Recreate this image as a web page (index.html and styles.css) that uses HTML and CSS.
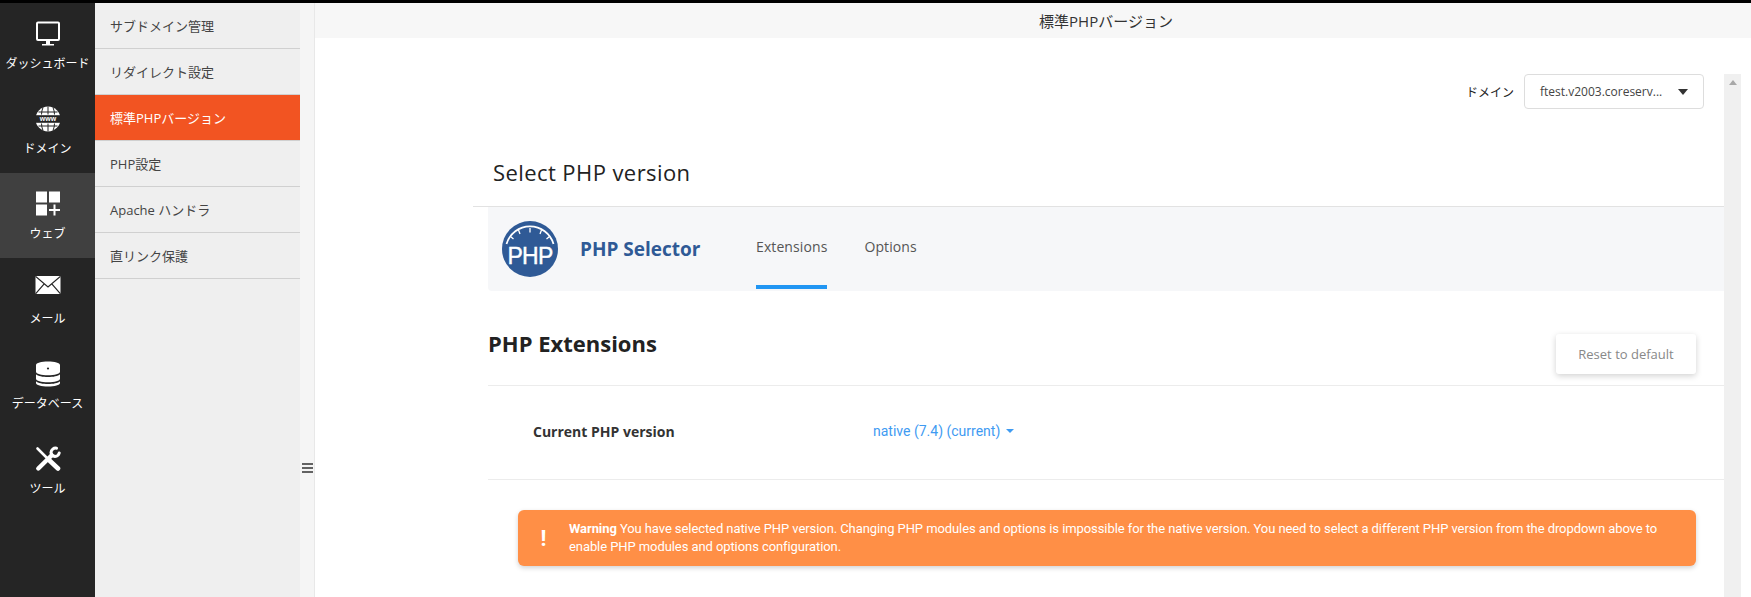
FILE: index.html
```html
<!DOCTYPE html>
<html lang="ja">
<head>
<meta charset="utf-8">
<title>標準PHPバージョン</title>
<link rel="stylesheet" href="styles.css">
</head>
<body>
<div class="topline"></div>
<div class="app">
  <nav class="rail">
    <a class="rail-item">
      <svg class="rail-icon" viewBox="0 0 26 26"><path fill="#fff" fill-rule="evenodd" d="M3 .5h20a2 2 0 0 1 2 2v15.500a2 2 0 0 1-2 2H15v3h4v1.500H7V23h4v-3H3a2 2 0 0 1-2-2V2.500a2 2 0 0 1 2-2zm0 2V18h20V2.500z"/></svg>
      <span>ダッシュボード</span>
    </a>
    <a class="rail-item">
      <svg class="rail-icon" viewBox="0 0 26 26"><circle cx="13" cy="13" r="12.500" fill="#fff"/><rect x="0" y="9.200" width="26" height="7.600" fill="#252525"/><path d="M3.500 6h19M3.500 20h19M13 .5v8M13 17.500v8M8 1.500Q6.500 5 6.500 8.500M18 1.500q1.500 3.500 1.500 7M6.500 17.500Q6.500 21 8 24.500M19.500 17.500q0 3.500-1.500 7" stroke="#252525" stroke-width="1" fill="none"/><text x="13" y="15.300" class="www">www</text></svg>
      <span>ドメイン</span>
    </a>
    <a class="rail-item rail-item-active">
      <svg class="rail-icon" viewBox="0 0 26 26"><path fill="#fff" d="M1 .5h11v11H1zM14 .5h11v11H14zM1 13.500h11v11H1zM18.500 13.500h2v4.500H25v2h-4.500v4.500h-2V20H14v-2h4.500z"/></svg>
      <span>ウェブ</span>
    </a>
    <a class="rail-item">
      <svg class="rail-icon" viewBox="0 0 26 26"><rect x=".5" y="0" width="25" height="18" fill="#fff"/><path d="M.5 .3 13 11 25.500 .3M.5 17.800 9.200 7.800M25.500 17.800 16.800 7.800" stroke="#252525" stroke-width="1.200" fill="none"/></svg>
      <span>メール</span>
    </a>
    <a class="rail-item">
      <svg class="rail-icon" viewBox="0 0 26 26"><path fill="#fff" d="M13 .5c6.600 0 12 1.500 12 3.500v6.800c0 2-5.400 3.500-12 3.500S1 12.800 1 10.800V4c0-2 5.400-3.500 12-3.500zM1 13.300c2 1.800 6.700 2.800 12 2.800s10-1 12-2.800v4.500c0 2-5.400 3.500-12 3.500S1 19.800 1 17.800zM1 20.300c2 1.800 6.700 2.800 12 2.800s10-1 12-2.800V22c0 2-5.400 3.500-12 3.500S1 24 1 22z"/><circle cx="13" cy="7.500" r="1.100" fill="#252525"/></svg>
      <span>データベース</span>
    </a>
    <a class="rail-item">
      <svg class="rail-icon" viewBox="0 0 26 26"><g fill="none" stroke="#fff" stroke-linecap="round"><path d="M2.500 2.500 13 13" stroke-width="2.600"/><path d="M14.500 14.500 23 22.500" stroke-width="4.600"/><path d="M3.300 22.500 16.500 9.500" stroke-width="4.400"/><path d="M21.500 2.200A4.600 4.600 0 0 0 16 6.500 4.600 4.600 0 0 0 20 10.500 4.600 4.600 0 0 0 24.200 7" stroke-width="3"/></g></svg>
      <span>ツール</span>
    </a>
  </nav>

  <aside class="submenu">
    <a class="sub-item">サブドメイン管理</a>
    <a class="sub-item">リダイレクト設定</a>
    <a class="sub-item sub-item-active">標準PHPバージョン</a>
    <a class="sub-item">PHP設定</a>
    <a class="sub-item">Apache ハンドラ</a>
    <a class="sub-item">直リンク保護</a>
  </aside>

  <div class="handle">
    <svg class="handle-icon" viewBox="0 0 11 10"><path d="M0 1h11M0 5h11M0 9h11" stroke="#333" stroke-width="1.600"/></svg>
  </div>

  <main class="main">
    <header class="page-title">標準PHPバージョン</header>
    <div class="main-body">
      <div class="content">
        <div class="domain-row">
          <span class="domain-label">ドメイン</span>
          <div class="domain-select">
            <span class="domain-value">ftest.v2003.coreserv...</span>
            <span class="domain-caret"></span>
          </div>
        </div>

        <section class="selector">
          <h1 class="selector-title">Select PHP version</h1>
          <div class="selector-panel">
            <div class="tabbar">
              <svg class="php-logo" viewBox="0 0 56 56">
                <circle cx="28" cy="28" r="28" fill="#2f5a96"/>
                <path d="M4.500 23A24.500 24.500 0 0 1 51.500 23" fill="none" stroke="#fff" stroke-width="1.800"/>
                <path d="M28 7v4.500M16.500 9l1.500 4M39.500 9l-1.500 4M8.500 15.500l3 2.500M47.500 15.500l-3 2.500" stroke="#fff" stroke-width="1.300"/>
                <text x="28" y="43" class="php-logo-text">PHP</text>
              </svg>
              <span class="tabbar-name">PHP Selector</span>
              <a class="tab tab-active">Extensions</a>
              <a class="tab">Options</a>
            </div>

            <div class="ext-head">
              <h2 class="ext-title">PHP Extensions</h2>
              <button class="reset-btn" type="button">Reset to default</button>
            </div>

            <div class="version-row">
              <span class="version-label">Current PHP version</span>
              <a class="version-link">native (7.4) (current)<span class="version-caret"></span></a>
            </div>

            <div class="warning">
              <span class="warning-mark">!</span>
              <p class="warning-text"><b>Warning</b> You have selected native PHP version. Changing PHP modules and options is impossible for the native version. You need to select a different PHP version from the dropdown above to enable PHP modules and options configuration.</p>
            </div>
          </div>
        </section>
      </div>
      <div class="scrollbar"><span class="scroll-up"></span></div>
      <div class="scroll-gutter"></div>
    </div>
  </main>
</div>
</body>
</html>
```

FILE: styles.css
```css
* { box-sizing: border-box; }

html, body {
  margin: 0;
  height: 100%;
  overflow: hidden;
  background: #fff;
  font-family: "Open Sans", "Noto Sans CJK JP", sans-serif;
  color: #333;
}

body { display: flex; flex-direction: column; }

.topline { height: 3px; background: #000; flex: none; }

.app { flex: 1; display: flex; min-height: 0; }

/* icon rail */
.rail { width: 95px; flex: none; background: #252525; }

.rail-item {
  height: 85px;
  display: flex;
  flex-direction: column;
  align-items: center;
  padding-top: 18px;
  color: #fff;
  font-size: 12px;
  line-height: 18px;
  white-space: nowrap;
}

.rail-item-active { background: #404040; }

.rail-icon { width: 26px; height: 26px; margin-bottom: 8px; flex: none; }

.www {
  font: 700 7px "Liberation Sans", sans-serif;
  fill: #fff;
  text-anchor: middle;
}

/* second level menu */
.submenu { width: 205px; flex: none; background: #efefef; }

.sub-item {
  display: flex;
  align-items: center;
  height: 46px;
  padding-left: 15px;
  font-size: 13px;
  color: #444;
  border-bottom: 1px solid #d0d0d0;
}

.sub-item-active {
  background: #f25422;
  color: #fff;
}

/* collapse handle */
.handle {
  width: 15px;
  flex: none;
  background: #f5f5f5;
  border-right: 1px solid #e8e8e8;
  padding: 460px 0 0 2px;
}

.handle-icon { display: block; width: 11px; height: 10px; }

/* main */
.main { flex: 1; min-width: 0; display: flex; flex-direction: column; }

.page-title {
  height: 35px;
  flex: none;
  background: #f7f7f7;
  display: flex;
  align-items: center;
  justify-content: center;
  padding-left: 146px;
  font-size: 15px;
  color: #333;
}

.main-body { flex: 1; min-height: 0; display: flex; overflow: hidden; }

.content { flex: 1; min-width: 0; padding-top: 36px; }

.scrollbar {
  width: 17px;
  flex: none;
  margin-top: 36px;
  background: #f0f0f0;
  display: flex;
  justify-content: center;
  padding-top: 6px;
}

.scroll-up {
  width: 0;
  height: 0;
  border-left: 4px solid transparent;
  border-right: 4px solid transparent;
  border-bottom: 5px solid #a8a8a8;
}

.scroll-gutter { width: 10px; flex: none; }

/* domain picker */
.domain-row {
  display: flex;
  justify-content: flex-end;
  align-items: center;
  gap: 10px;
  padding-right: 20px;
}

.domain-label { font-size: 12px; color: #222; }

.domain-select {
  width: 180px;
  height: 35px;
  border: 1px solid #ddd;
  border-radius: 4px;
  background: #fff;
  display: flex;
  align-items: center;
  justify-content: space-between;
  padding: 0 15px;
  font-size: 12px;
  color: #444;
}

.domain-caret {
  width: 0;
  height: 0;
  border-left: 5px solid transparent;
  border-right: 5px solid transparent;
  border-top: 6px solid #333;
}

/* selector section */
.selector { margin: 34px 0 0 158px; }

.selector-title {
  margin: 0;
  height: 64px;
  padding: 14px 0 0 20px;
  font-size: 22px;
  line-height: 30px;
  font-weight: 400;
  color: #222;
  border-bottom: 1px solid #e2e2e2;
  letter-spacing: .42px;
}

.selector-panel { padding-left: 15px; }

.tabbar {
  height: 84px;
  display: flex;
  background: #f6f7f9;
  border-radius: 0 0 0 4px;
  align-items: center;
  padding-left: 14px;
}

.php-logo { width: 56px; height: 56px; flex: none; }

.php-logo-text {
  font: 400 23px "Liberation Sans", sans-serif;
  fill: #fff;
  stroke: #fff;
  stroke-width: .4px;
  text-anchor: middle;
  letter-spacing: -.8px;
}

.tabbar-name {
  margin-left: 22px;
  width: 176px;
  flex: none;
  font-size: 19px;
  font-weight: 700;
  color: #2f5a96;
}

.tab {
  display: flex;
  align-items: center;
  font-size: 14px;
  letter-spacing: .1px;
  color: #555;
  margin-right: 37px;
  border-bottom: 4px solid transparent;
  height: 82px;
  align-self: flex-start;
}

.tab-active { border-bottom-color: #2196f3; }

.ext-head {
  height: 95px;
  display: flex;
  justify-content: space-between;
  align-items: flex-start;
  padding: 37px 28px 0 0;
  border-bottom: 1px solid #ececec;
}

.ext-title {
  margin: 0;
  font-size: 22px;
  line-height: 30px;
  font-weight: 700;
  color: #222;
}

.reset-btn {
  width: 140px;
  height: 40px;
  margin-top: 6px;
  border: 0;
  border-radius: 3px;
  background: #fff;
  box-shadow: 0 2px 6px rgba(0, 0, 0, .18);
  font-family: inherit;
  font-size: 13px;
  color: #888;
}

.version-row {
  height: 94px;
  display: flex;
  align-items: center;
  padding: 0 0 2px 45px;
  border-bottom: 1px solid #ececec;
  font-size: 14px;
}

.version-label { width: 340px; flex: none; font-weight: 700; color: #333; }

.version-link {
  font-family: "Roboto", sans-serif;
  color: #3f9bf2;
  display: flex;
  align-items: center;
  margin-top: -2px;
}

.version-caret {
  margin-left: 6px;
  width: 0;
  height: 0;
  border-left: 4px solid transparent;
  border-right: 4px solid transparent;
  border-top: 4px solid #3f9bf2;
}

.warning {
  margin: 30px 28px 0 30px;
  height: 56px;
  background: #ff8f46;
  border-radius: 6px;
  box-shadow: 0 2px 5px rgba(0, 0, 0, .18);
  display: flex;
  align-items: center;
  color: #fff;
  font-family: "Roboto", sans-serif;
}

.warning-mark {
  width: 51px;
  flex: none;
  text-align: center;
  font-size: 22px;
  font-weight: 700;
}

.warning-text {
  margin: 0;
  font-size: 13px;
  line-height: 18px;
  letter-spacing: -.08px;
  padding-right: 30px;
}
```
